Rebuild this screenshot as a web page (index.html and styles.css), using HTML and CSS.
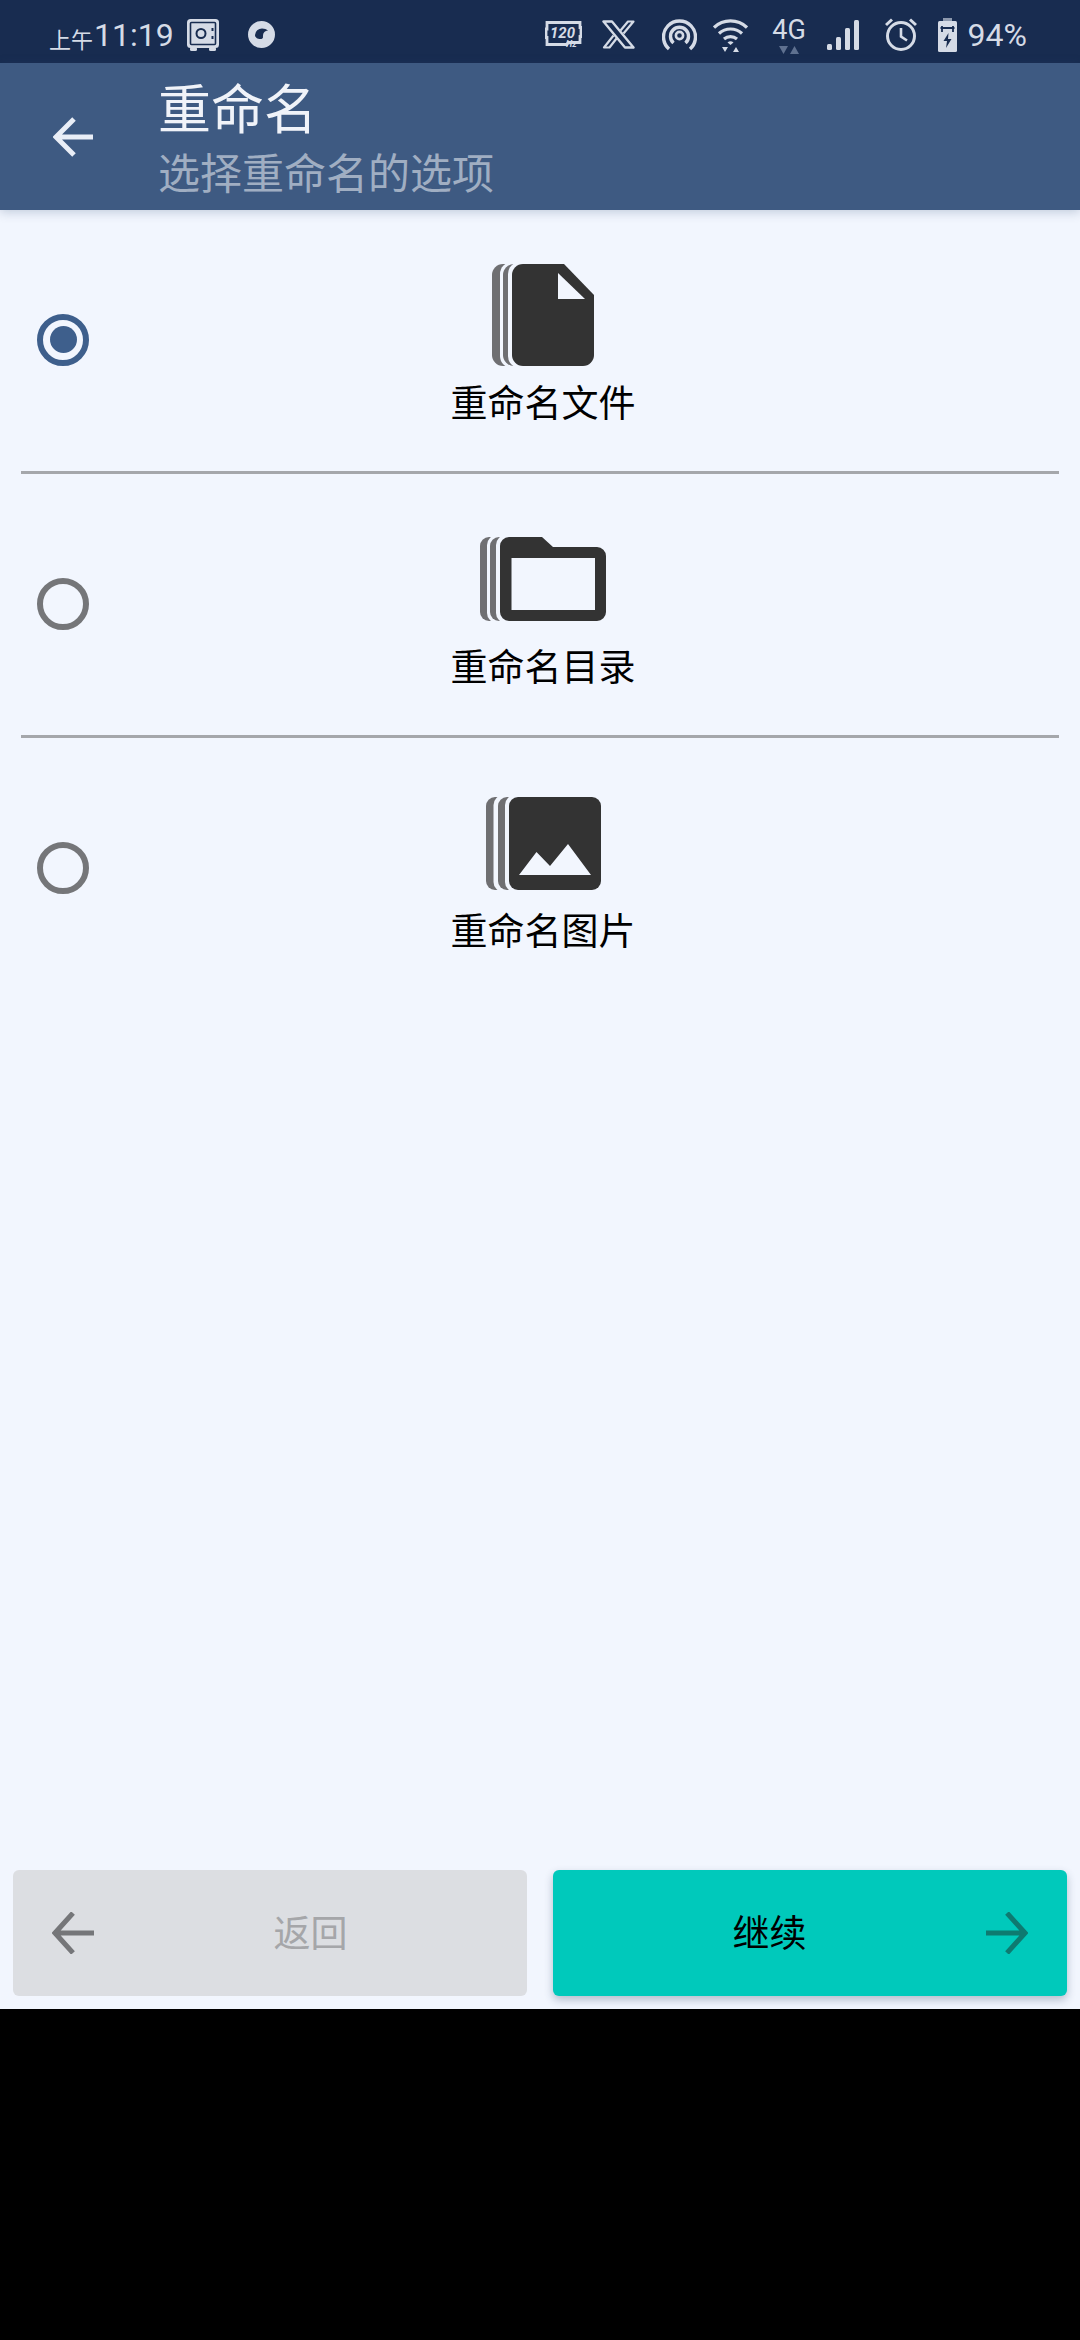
FILE: index.html
```html
<!DOCTYPE html>
<html>
<head>
  <title>重命名</title>
  <link rel="stylesheet" href="styles.css">
</head>
<body>
  <div class="screen">
    <div class="status-bar">
      <span class="ampm">上午</span><span class="clock">11:19</span>
      <svg class="st-safe" viewBox="0 0 32 32"><rect x="0" y="0" width="32" height="29" rx="3.500" fill="#d5dbe6"/><rect x="3.500" y="3.500" width="25" height="22" rx="1" fill="none" stroke="#182c50" stroke-width="1.600"/><circle cx="14" cy="14.500" r="4.500" fill="none" stroke="#182c50" stroke-width="2"/><rect x="24.500" y="9" width="2" height="3" fill="#182c50"/><rect x="24.500" y="17" width="2" height="3" fill="#182c50"/><rect x="3" y="28" width="7" height="4" rx="1.500" fill="#d5dbe6"/><rect x="22" y="28" width="7" height="4" rx="1.500" fill="#d5dbe6"/></svg>
      <svg class="st-dot" viewBox="0 0 27 27"><circle cx="13.500" cy="13.500" r="13.500" fill="#d5dbe6"/><path d="M7 14a7 7 0 0 1 7-6.500c2.500 0 4.500.8 6 2.300-3.400-.2-5.200 2-5 6.700-.5 1-1.300 1.500-2.500 1.500C9.500 18 7 16.500 7 14z" fill="#182c50"/></svg>
      <span class="st-spacer"></span>
      <svg class="st-hz" viewBox="0 0 37 28"><path d="M2 1.500h33v5h1v9h-1v6H23l-1 2H2v-7H1V8h1z" fill="none" stroke="#d5dbe6" stroke-width="2.800"/><text x="5" y="17" class="hz-num">120</text><text x="21" y="26" class="hz-unit">Hz</text></svg>
      <svg class="st-x" viewBox="0 0 33 29"><path d="M1.500 1.500h8.500l21.500 26h-8.500z" fill="none" stroke="#d5dbe6" stroke-width="2.400" stroke-linejoin="round"/><path d="M18.500 10.500L26 1.500h5.500L21.500 13.500M14.500 18.500L7.500 27.500H2L11.500 15.500" fill="none" stroke="#d5dbe6" stroke-width="2.200" stroke-linejoin="round"/></svg>
      <svg class="st-hotspot" viewBox="0 0 35 33"><path d="M7 31a16 16 0 1 1 21 0" fill="none" stroke="#d5dbe6" stroke-width="3.400"/><path d="M11.500 25a9 9 0 1 1 12 0" fill="none" stroke="#d5dbe6" stroke-width="3.400"/><circle cx="17.500" cy="17.500" r="3.600" fill="none" stroke="#d5dbe6" stroke-width="2.600"/></svg>
      <svg class="st-wifi" viewBox="0 0 35 35"><path d="M1 10.500a24 24 0 0 1 33 0" fill="none" stroke="#d5dbe6" stroke-width="3.200"/><path d="M6 16.500a17 17 0 0 1 23 0" fill="none" stroke="#d5dbe6" stroke-width="3.200"/><path d="M11 22a10 10 0 0 1 13 0" fill="none" stroke="#d5dbe6" stroke-width="3.200"/><path d="M14.500 25.500a4.500 4.500 0 0 1 6 0l-3 2.500z" fill="#d5dbe6"/><path d="M9 30h6l-3 5zM20 35h6l-3-5z" fill="#d5dbe6"/></svg>
      <div class="st-net">
        <span class="net-label">4G</span>
        <svg class="net-arrows" viewBox="0 0 20 8"><path d="M0 0h9l-4.500 8z" fill="#5f7190"/><path d="M11 8h9l-4.500-8z" fill="#5f7190"/></svg>
      </div>
      <svg class="st-signal" viewBox="0 0 33 30"><rect x="0" y="24" width="5" height="6" rx="1.500"/><rect x="9" y="17" width="5" height="13" rx="1.500"/><rect x="18" y="8" width="5" height="22" rx="1.500"/><rect x="27" y="0" width="5" height="30" rx="1.500"/></svg>
      <svg class="st-alarm" viewBox="0 0 32 33"><circle cx="16" cy="18" r="13.500" fill="none" stroke="#d5dbe6" stroke-width="3"/><path d="M16 10v8.500l6 4" fill="none" stroke="#d5dbe6" stroke-width="2.600"/><path d="M1 7l6-5.500M31 7l-6-5.500" fill="none" stroke="#d5dbe6" stroke-width="3"/></svg>
      <svg class="st-battery" viewBox="0 0 19 34"><rect x="5" y="0" width="9" height="4" fill="#8d99ad"/><rect x="0" y="3" width="19" height="31" rx="1.500" fill="#d5dbe6"/><path d="M4 8v6M15 8v6M2.500 10h14" fill="none" stroke="#182c50" stroke-width="1.800"/><path d="M10.500 15l-5 8h3.500l-1 7 5.500-9h-3.500z" fill="#182c50"/></svg>
      <span class="level">94%</span>
    </div>

    <header class="app-bar">
      <svg class="back" viewBox="0 0 42 42"><path d="M40 21H4M21 3L3 21l18 18" fill="none" stroke="#e9eef7" stroke-width="5"/></svg>
      <div class="titles">
        <div class="title">重命名</div>
        <div class="subtitle">选择重命名的选项</div>
      </div>
    </header>

    <main class="options">
      <div class="option">
        <span class="radio radio-on"></span>
        <div class="option-body">
          <div class="option-icon">
            <svg width="102" height="102" viewBox="0 0 102 102">
              <rect x="0" y="0" width="60" height="102" rx="11" fill="#6f6f72"/>
              <rect x="8" y="-2" width="60" height="106" rx="12" fill="#f2f6fe"/>
              <rect x="11" y="0" width="60" height="102" rx="11" fill="#6f6f72"/>
              <rect x="16" y="-2" width="60" height="106" rx="12" fill="#f2f6fe"/>
              <path d="M31 0h41l30 31v60a11 11 0 0 1-11 11H31a11 11 0 0 1-11-11V11A11 11 0 0 1 31 0z" fill="#333"/>
              <path d="M66 9l27 26H66z" fill="#f2f6fe"/>
            </svg>
          </div>
          <div class="option-label">重命名文件</div>
        </div>
      </div>
      <hr class="divider">
      <div class="option">
        <span class="radio"></span>
        <div class="option-body">
          <div class="option-icon">
            <svg width="126" height="84" viewBox="0 0 126 84">
              <rect x="0" y="0" width="60" height="84" rx="9" fill="#6f6f72"/>
              <rect x="7" y="-2" width="60" height="88" rx="10" fill="#f2f6fe"/>
              <rect x="10" y="0" width="60" height="84" rx="9" fill="#6f6f72"/>
              <rect x="16" y="-2" width="60" height="88" rx="10" fill="#f2f6fe"/>
              <path d="M29 0h33l11 10h44a9 9 0 0 1 9 9v56a9 9 0 0 1-9 9H29a9 9 0 0 1-9-9V9a9 9 0 0 1 9-9z" fill="#333"/>
              <rect x="31.500" y="21" width="83.500" height="52" fill="#f2f6fe"/>
            </svg>
          </div>
          <div class="option-label">重命名目录</div>
        </div>
      </div>
      <hr class="divider">
      <div class="option">
        <span class="radio"></span>
        <div class="option-body">
          <div class="option-icon">
            <svg width="115" height="93" viewBox="0 0 115 93">
              <rect x="0" y="0" width="60" height="93" rx="9" fill="#6f6f72"/>
              <rect x="7.500" y="-2" width="60" height="97" rx="10" fill="#f2f6fe"/>
              <rect x="12" y="0" width="60" height="93" rx="9" fill="#6f6f72"/>
              <rect x="19" y="-2" width="60" height="97" rx="10" fill="#f2f6fe"/>
              <rect x="23" y="0" width="92" height="93" rx="9" fill="#333"/>
              <path d="M33 78l17.500-23L64 69l18-22 23 31z" fill="#f2f6fe"/>
            </svg>
          </div>
          <div class="option-label">重命名图片</div>
        </div>
      </div>
    </main>

    <footer class="actions">
      <button class="btn btn-back">
        <svg class="btn-arrow" viewBox="0 0 42 42"><path d="M42 21H4M21 1L3 21l18 20" fill="none" stroke="#757679" stroke-width="5"/></svg>
        <span class="btn-text">返回</span>
      </button>
      <button class="btn btn-next">
        <span class="btn-text">继续</span>
        <svg class="btn-arrow" viewBox="0 0 42 42"><path d="M0 21h38M21 1l18 20-18 20" fill="none" stroke="#0e7a70" stroke-width="5"/></svg>
      </button>
    </footer>
  </div>
</body>
</html>
```

FILE: styles.css
```css
html, body {
  margin: 0;
  height: 100%;
}

body {
  background: #000;
  font-family: "Noto Sans CJK SC", Roboto, sans-serif;
}

.screen {
  height: 2009px;
  display: flex;
  flex-direction: column;
  background: #f2f6fe;
}

.status-bar {
  height: 63px;
  flex-shrink: 0;
  display: flex;
  align-items: center;
  padding: 6px 53px 0 49px;
  background: #182c50;
  color: #d5dbe6;
  box-sizing: border-box;
}

.status-bar svg {
  display: block;
  flex-shrink: 0;
}

.ampm {
  font-size: 22px;
  margin-top: 6px;
}

.clock,
.level {
  font-family: Roboto, sans-serif;
  font-size: 32px;
}

.clock {
  margin-left: 1px;
}

.level {
  margin-left: 11px;
}

.st-spacer {
  flex: 1;
}

.st-safe { width: 32px; height: 32px; margin-left: 13px; }
.st-dot { width: 27px; height: 27px; margin-left: 29px; }
.st-hz { width: 37px; height: 28px; }
.st-x { width: 33px; height: 29px; margin-left: 20px; }
.st-hotspot { width: 35px; height: 33px; margin-left: 27px; }
.st-wifi { width: 35px; height: 35px; margin-left: 16px; }
.st-signal { width: 33px; height: 30px; margin-left: 20px; stroke: none; fill: #d5dbe6; }
.st-alarm { width: 32px; height: 33px; margin-left: 25px; }
.st-battery { width: 19px; height: 34px; margin-left: 21px; }

.hz-num {
  font-family: Roboto, sans-serif;
  font-size: 15px;
  font-weight: 700;
  font-style: italic;
  fill: #d5dbe6;
}

.hz-unit {
  font-family: Roboto, sans-serif;
  font-size: 9px;
  font-weight: 700;
  font-style: italic;
  fill: #d5dbe6;
}

.st-net {
  width: 35px;
  margin-left: 24px;
  display: flex;
  flex-direction: column;
  align-items: center;
}

.net-label {
  font-family: Roboto, sans-serif;
  font-size: 27px;
  line-height: 28px;
}

.net-arrows {
  width: 20px;
  height: 8px;
  margin-top: 2px;
}

.app-bar {
  height: 147px;
  flex-shrink: 0;
  display: flex;
  align-items: center;
  padding-left: 53px;
  background: #3e5a82;
  box-shadow: 0 2px 10px rgba(40, 70, 110, 0.25);
  position: relative;
  box-sizing: border-box;
}

.back {
  width: 42px;
  height: 42px;
  flex-shrink: 0;
}

.titles {
  margin-left: 63px;
  padding-top: 2px;
}

.title {
  font-size: 53px;
  line-height: 60px;
  color: #f0f3f9;
}

.subtitle {
  font-size: 42px;
  line-height: 56px;
  margin-top: 7px;
  color: #a0aec2;
}

.options {
  flex: 1;
}

.option {
  height: 261px;
  display: flex;
  align-items: center;
  padding: 0 31px 0 37px;
  box-sizing: border-box;
}

.radio {
  width: 52px;
  height: 52px;
  flex-shrink: 0;
  margin-top: -2px;
  border: 6px solid #757679;
  border-radius: 50%;
  box-sizing: border-box;
  display: flex;
  align-items: center;
  justify-content: center;
}

.radio-on {
  border-color: #3e5f8c;
}

.radio-on::after {
  content: "";
  width: 27px;
  height: 27px;
  border-radius: 50%;
  background: #3e5f8c;
}

.option-body {
  flex: 1;
  align-self: flex-start;
  padding: 45px 52px 0 0;
  display: flex;
  flex-direction: column;
  align-items: center;
}

.option-icon {
  height: 120px;
  display: flex;
  align-items: center;
  justify-content: center;
}

.option-icon svg {
  display: block;
  overflow: hidden;
}

.option-label {
  font-size: 37px;
  line-height: 52px;
  color: #000;
}

.divider {
  height: 3px;
  margin: 0 21px;
  border: 0;
  background: #a5a7ab;
}

.actions {
  flex-shrink: 0;
  display: flex;
  gap: 26px;
  padding: 0 13px 13px;
}

.btn {
  flex: 1;
  height: 126px;
  display: flex;
  align-items: center;
  padding: 0;
  border: 0;
  border-radius: 6px;
  font-family: inherit;
  font-size: 37px;
}

.btn-back {
  padding-left: 39px;
  background: #dcdee2;
  color: #a5a6a9;
}

.btn-next {
  padding-right: 39px;
  background: #00c9bb;
  color: #000;
  box-shadow: 0 4px 8px rgba(40, 60, 90, 0.3);
}

.btn-arrow {
  width: 42px;
  height: 42px;
  flex-shrink: 0;
}

.btn-text {
  flex: 1;
  text-align: center;
  line-height: 50px;
  margin-top: -4px;
}
```
